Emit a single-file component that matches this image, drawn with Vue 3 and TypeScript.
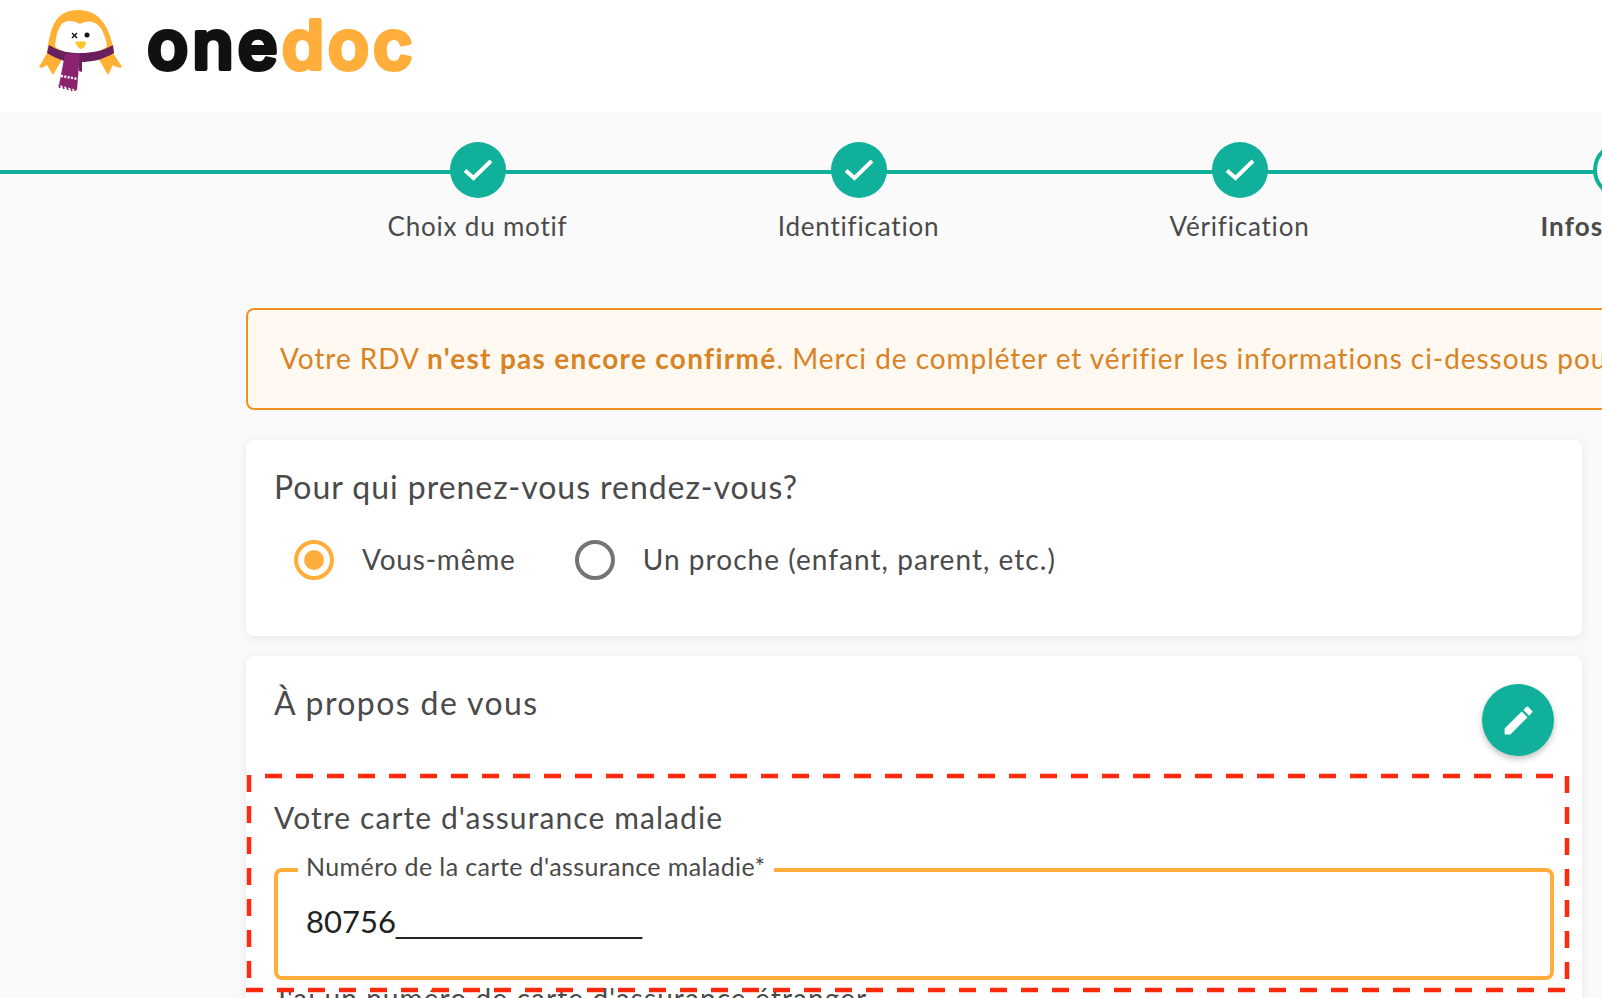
<script setup lang="ts">
interface Step {
  label: string
  done: boolean
}

const steps: Step[] = [
  { label: 'Choix du motif', done: true },
  { label: 'Identification', done: true },
  { label: 'Vérification', done: true },
  { label: 'Infos patient', done: false },
]
</script>

<template>
  <div class="page">
    <header class="topbar">
      <svg class="penguin" viewBox="30 0 100 100" width="100" height="100">
        <path d="M50 48 L39 67 Q41 69 47 65 L53 75 L64 56 Z" fill="#ffb035" />
        <path d="M110 48 L122 67 Q120 69 113 65 L108 75 L97 56 Z" fill="#ffb035" />
        <path d="M47 52 C50 30 54 10 78 10 C102 10 110 30 114 52 Z" fill="#ffb035" />
        <path d="M55 46 C57 30 60 22 68 21 C73 21 77 22 80 24 C84 22 88 21 92 22 C101 24 105 34 107 46 C100 56 62 56 55 46 Z" fill="#fff" />
        <circle cx="87" cy="35" r="2.500" fill="#111" />
        <path d="M72 33 L77 38 M77 33 L72 38" stroke="#111" stroke-width="1.400" />
        <path d="M75 42 C79 41 83 41 86 42 C86 46 83 49 81 49 C78 48 76 45 75 42 Z" fill="#ffc72c" />
        <path d="M49 45 C60 52 70 53 80 53 C92 53 103 51 113 45 L114 53 C102 60 92 62 80 62 L64 61 C58 59 52 56 47 53 Z" fill="#6a1f5e" />
        <path d="M78 55 L82 55 L82 72 L79 71 Z" fill="#6a1f5e" />
        <path d="M65 54 L80 53 L77 90 L59 85 Z" fill="#8a2270" />
        <path d="M61 76 L78 79" stroke="#fff" stroke-width="2.500" stroke-dasharray="2 1.400" />
        <path d="M59 85 L60 88 M63 86 L64 89 M67 87 L68 90 M71 88 L72 91 M75 89 L75 91" stroke="#8a2270" stroke-width="1.600" />
      </svg>
      <svg class="wordmark" width="280" height="100" viewBox="0 0 280 100">
        <text x="1" y="69"><tspan class="word-one">one</tspan><tspan class="word-doc">doc</tspan></text>
      </svg>
    </header>

    <nav class="stepper">
      <div v-for="step in steps" :key="step.label" class="step" :class="{ current: !step.done }">
        <div class="bullet">
          <svg v-if="step.done" viewBox="0 0 28 28" width="28" height="28" fill="none" stroke="#fff" stroke-width="4">
            <polyline points="1,14.500 9.500,22 27,5" />
          </svg>
        </div>
        <span class="step-label">{{ step.label }}</span>
      </div>
    </nav>

    <main class="content">
      <div class="notice">Votre RDV <strong>n'est pas encore confirmé</strong>. Merci de compléter et vérifier les informations ci-dessous pour confirmer votre RDV.</div>

      <section class="card who">
        <h2 class="card-title">Pour qui prenez-vous rendez-vous?</h2>
        <div class="radios">
          <div class="radio-item">
            <span class="radio checked"></span>
            <span class="tight">Vous-même</span>
          </div>
          <div class="radio-item">
            <span class="radio"></span>
            <span>Un proche (enfant, parent, etc.)</span>
          </div>
        </div>
      </section>

      <section class="card about">
        <div class="about-head">
          <h2 class="card-title about-title">À propos de vous</h2>
          <button class="fab" type="button" aria-label="Modifier">
            <svg viewBox="0 0 24 24" width="37" height="37" fill="#fff">
              <path d="M3 17.250V21h3.750L17.810 9.940l-3.750-3.750L3 17.250zM20.710 7.040a1 1 0 0 0 0-1.410l-2.340-2.340a1 1 0 0 0-1.410 0l-1.830 1.830 3.750 3.750 1.830-1.830z" />
            </svg>
          </button>
        </div>
        <h3 class="insurance-title">Votre carte d'assurance maladie</h3>
        <fieldset class="field">
          <legend>Numéro de la carte d'assurance maladie*</legend>
          <div class="field-value">80756<span class="blanks">_______________</span></div>
        </fieldset>
        <p class="helper">J'ai un numéro de carte d'assurance étranger</p>
      </section>
    </main>

    <svg class="annotation" width="1602" height="998" fill="none" stroke="#ff2a0c" stroke-width="4.500" stroke-dasharray="17 14">
      <line x1="265" y1="776" x2="1553" y2="776" />
      <line x1="246" y1="990" x2="1565" y2="990" />
      <line x1="249" y1="775" x2="249" y2="985" />
      <line x1="1567" y1="776" x2="1567" y2="979" />
    </svg>
  </div>
</template>

<style>
html,
body {
  margin: 0;
  overflow: hidden;
}
</style>

<style scoped>
.page {
  position: relative;
  width: 1602px;
  height: 998px;
  overflow: hidden;
  background: #fafafa;
  color: #4a4a4a;
  font-family: Lato, "Open Sans", sans-serif;
}

.topbar {
  display: flex;
  align-items: flex-start;
  height: 112px;
  padding-left: 30px;
  background: #fff;
  box-sizing: border-box;
}

.penguin {
  flex: none;
}

.wordmark {
  flex: none;
  margin-left: 16px;
}

.wordmark text {
  font-family: Inter, sans-serif;
  font-size: 68px;
  font-weight: 600;
  letter-spacing: 3.800px;
  stroke-width: 4px;
  stroke-linejoin: round;
  stroke-linecap: round;
}

.word-one {
  fill: #111;
  stroke: #111;
}

.word-doc {
  fill: #ffae3b;
  stroke: #ffae3b;
}

.stepper {
  position: relative;
  display: flex;
  padding-left: 287px;
  height: 196px;
}

.stepper::before {
  content: "";
  position: absolute;
  left: 0;
  right: 0;
  top: 58px;
  height: 4px;
  background: #10b09a;
}

.step {
  position: relative;
  flex: none;
  width: 381px;
  display: flex;
  flex-direction: column;
  align-items: center;
  padding-top: 30px;
}

.bullet {
  display: flex;
  align-items: center;
  justify-content: center;
  width: 56px;
  height: 56px;
  border-radius: 50%;
  background: #10b09a;
  box-sizing: border-box;
}

.current .bullet {
  background: #fafafa;
  border: 4px solid #10b09a;
}

.step-label {
  margin-top: 12px;
  font-size: 26px;
  line-height: 32px;
  letter-spacing: 0.8px;
  white-space: nowrap;
}

.current .step-label {
  font-weight: 700;
  letter-spacing: 1.100px;
}

.content {
  width: 1336px;
  margin-left: 246px;
}

.notice {
  box-sizing: border-box;
  width: 1500px;
  height: 102px;
  padding-left: 32px;
  white-space: nowrap;
  border: 2px solid #f0901f;
  border-radius: 8px;
  background: #fff9f2;
  color: #d98324;
  font-size: 28px;
  line-height: 96px;
  letter-spacing: 0.950px;
}

.notice strong {
  font-weight: 700;
  letter-spacing: 1.300px;
}

.card {
  box-sizing: border-box;
  background: #fff;
  border-radius: 8px;
  box-shadow: 0 2px 12px rgba(0, 0, 0, 0.08);
  padding: 28px 28px 0;
}

.who {
  margin-top: 30px;
  height: 196px;
}

.about {
  margin-top: 20px;
  height: 400px;
}

.card-title {
  margin: 0;
  font-size: 32px;
  font-weight: 400;
  line-height: 38px;
  letter-spacing: 0.960px;
}

.about-title {
  letter-spacing: 1.400px;
}

.radios {
  display: flex;
  align-items: center;
  gap: 59px;
  margin-top: 32px;
  padding-left: 20px;
  font-size: 28px;
  letter-spacing: 1.050px;
}

.tight {
  letter-spacing: 0.800px;
}

.radio-item {
  display: flex;
  align-items: center;
  gap: 28px;
}

.radio {
  position: relative;
  flex: none;
  box-sizing: border-box;
  width: 40px;
  height: 40px;
  margin-top: 2px;
  border: 4px solid #757575;
  border-radius: 50%;
}

.radio.checked {
  border-color: #ffad3b;
}

.radio.checked::after {
  content: "";
  position: absolute;
  inset: 6px;
  border-radius: 50%;
  background: #ffad3b;
}

.about-head {
  display: flex;
  align-items: flex-start;
  justify-content: space-between;
  height: 113px;
}

.fab {
  display: flex;
  align-items: center;
  justify-content: center;
  width: 72px;
  height: 72px;
  padding: 0;
  border: none;
  border-radius: 50%;
  background: #10b09a;
  box-shadow: 0 3px 6px rgba(0, 0, 0, 0.25);
}

.insurance-title {
  margin: 0;
  font-size: 30px;
  font-weight: 400;
  line-height: 40px;
  letter-spacing: 1.100px;
}

.field {
  box-sizing: border-box;
  height: 128px;
  margin: 15px 0 0;
  padding: 0 28px;
  border: 4px solid #ffad3b;
  border-radius: 8px;
}

.field legend {
  padding: 0 8px 8px;
  margin-left: -8px;
  font-size: 25px;
  line-height: 28px;
  letter-spacing: 0.400px;
}

.field-value {
  margin-top: 13px;
  font-size: 31px;
  line-height: 40px;
  color: #212121;
}

.blanks {
  font-family: "Liberation Sans", sans-serif;
  font-size: 29.500px;
}

.helper {
  margin: 1px 0 0;
  font-size: 28px;
  line-height: 34px;
  letter-spacing: 1.100px;
}

.annotation {
  position: absolute;
  left: 0;
  top: 0;
  pointer-events: none;
}
</style>
